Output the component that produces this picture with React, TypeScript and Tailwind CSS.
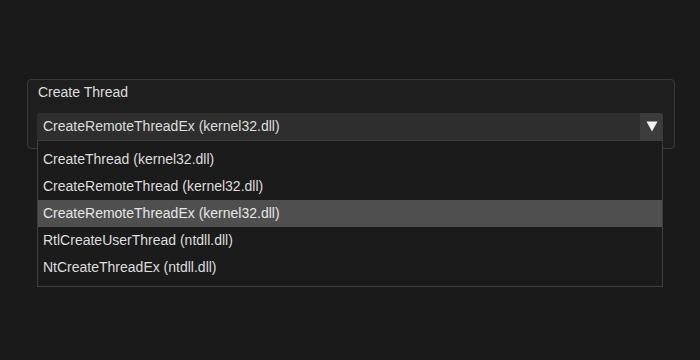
const ITEMS = [
  "CreateThread (kernel32.dll)",
  "CreateRemoteThread (kernel32.dll)",
  "CreateRemoteThreadEx (kernel32.dll)",
  "RtlCreateUserThread (ntdll.dll)",
  "NtCreateThreadEx (ntdll.dll)",
];

const SELECTED = 2;

export default function App() {
  return (
    <div
      className="w-[700px] h-[360px] bg-[#1a1a1a] pt-[79px] pl-[27px] text-[14px] text-[#dedede]"
      style={{ fontFamily: '"Liberation Sans", Arial, sans-serif' }}
    >
      {/* group panel */}
      <div className="w-[648px] h-[70px] rounded-[4px] border border-[#3a3a3a] bg-[#1e1e1e]">
        <div className="h-[24px] flex items-center pl-[10px] mt-[0px]">Create Thread</div>

        {/* combo */}
        <div className="relative mt-[9px] ml-[9px] w-[626px] h-[27px] flex bg-[#2e2e2e] rounded-t-[3px]">
          <div className="flex-1 flex items-center pl-[6px]">{ITEMS[SELECTED]}</div>
          <div className="w-[23px] h-full flex items-center justify-center bg-[#3c3c3c] rounded-tr-[3px]">
            <svg width="12" height="11" viewBox="0 0 12 11">
              <polygon points="0.5,0.5 11.5,0.5 6,10.5" fill="#f2f2f2" />
            </svg>
          </div>

          {/* popup list */}
          <div className="absolute top-full left-0 w-full z-10 border border-[#3e3e3e] bg-[#1b1b1b] py-[5px]">
            {ITEMS.map((item, i) => (
              <div
                key={item}
                className={
                  "h-[27px] flex items-center pl-[5px] " +
                  (i === SELECTED ? "bg-[#4f4f4f] text-[#e6e6e6]" : "")
                }
              >
                {item}
              </div>
            ))}
          </div>
        </div>
      </div>
    </div>
  );
}
